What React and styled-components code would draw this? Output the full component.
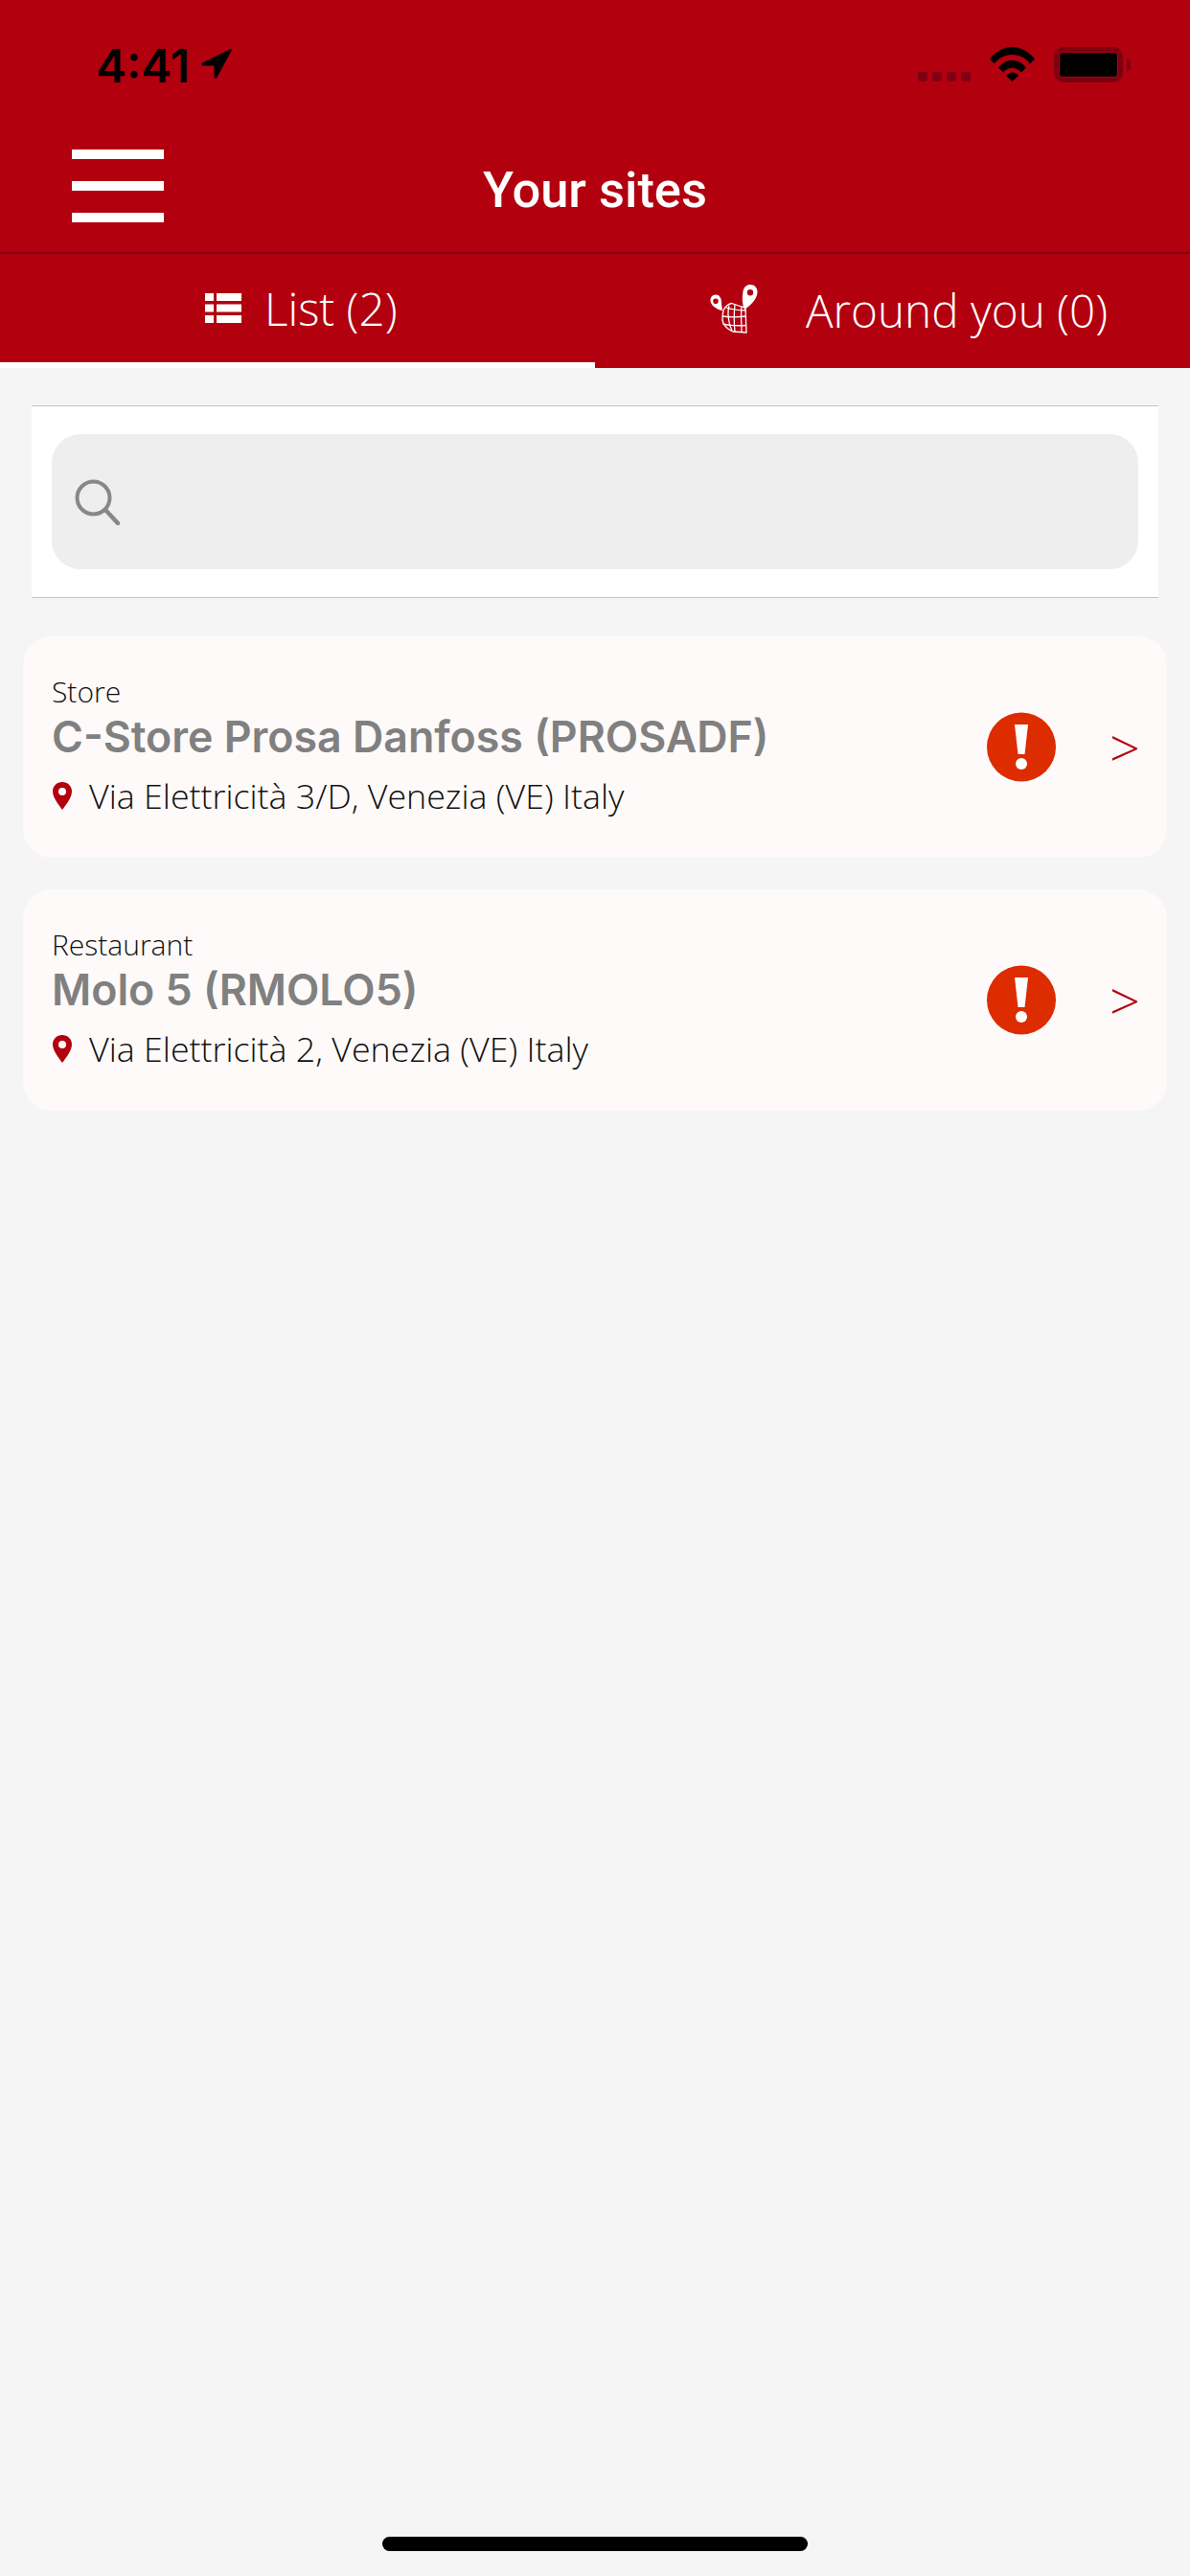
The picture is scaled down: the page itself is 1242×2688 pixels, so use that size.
import React from 'react';
import styled, { createGlobalStyle } from 'styled-components';

const GlobalStyle = createGlobalStyle`
  html, body {
    margin: 0;
    padding: 0;
    background: #f5f5f5;
  }
  * {
    box-sizing: border-box;
  }
`;

const Page = styled.div`
  width: 1242px;
  height: 2688px;
  display: flex;
  flex-direction: column;
  background: #f5f5f5;
  overflow: hidden;
`;

const Header = styled.header`
  background: #b2000f;
`;

const StatusBar = styled.div`
  height: 132px;
  padding: 42px 70px 0 100px;
  display: flex;
  align-items: flex-start;
`;

const Time = styled.span`
  font: 600 48px/54px Inter, "Liberation Sans", sans-serif;
  color: #000;
  margin-right: 11px;
`;

const ArrowSlot = styled.span`
  display: block;
  padding-top: 8px;
`;

const StatusIcons = styled.div`
  margin-left: auto;
  display: flex;
  align-items: flex-start;
  gap: 20px;
  padding-top: 7px;
`;

const SignalDots = styled.div`
  display: flex;
  gap: 5px;
  padding-top: 26px;
`;

const SignalDot = styled.span`
  width: 10px;
  height: 10px;
  border-radius: 3px;
  background: #7f0010;
`;

const Battery = styled.div`
  width: 72px;
  height: 37px;
  border: 5px solid #7f0010;
  border-radius: 10px;
  padding: 1px;
  position: relative;
  &::before {
    content: '';
    display: block;
    height: 100%;
    background: #000;
    border-radius: 4px;
  }
  &::after {
    content: '';
    position: absolute;
    right: -13px;
    top: 7px;
    width: 4px;
    height: 13px;
    background: #7f0010;
    border-radius: 0 4px 4px 0;
  }
`;

const NavBar = styled.div`
  height: 133px;
  border-bottom: 2px solid #7f0010;
  display: flex;
  align-items: center;
  position: relative;
`;

const MenuButton = styled.div`
  margin: 0 0 7px 75px;
  width: 96px;
  display: flex;
  flex-direction: column;
  gap: 23px;
  filter: blur(0.7px);
`;

const MenuBar = styled.span`
  height: 10px;
  background: #fff;
`;

const Title = styled.h1`
  margin: 0;
  position: absolute;
  left: 0;
  right: 0;
  text-align: center;
  font: 500 52.5px/60px Roboto, sans-serif;
  color: #fff;
`;

const Tabs = styled.div`
  display: flex;
  height: 119px;
`;

const Tab = styled.div`
  width: 621px;
  display: flex;
  align-items: center;
  padding-left: ${(p) => p.$inset}px;
  gap: ${(p) => p.$gap}px;
  border-bottom: 6px solid ${(p) => (p.$active ? '#fff' : '#b2000f')};
  font: 300 47.6px/60px "Open Sans", sans-serif;
  color: #fff;
  white-space: nowrap;
`;

const TabLabel = styled.span`
  position: relative;
  top: ${(p) => p.$shift || 0}px;
`;

const SearchPanel = styled.div`
  margin: 39px 33px 0;
  padding: 29px 21px;
  height: 201px;
  background: #fff;
  border-top: 1px solid #c4c4c4;
  border-bottom: 1px solid #c4c4c4;
`;

const SearchField = styled.div`
  height: 141px;
  padding: 0 0 0 24px;
  display: flex;
  align-items: center;
  background: #eee;
  border-radius: 30px;
`;

const CardList = styled.div`
  margin: 40px 24px 0;
  display: flex;
  flex-direction: column;
  gap: 33px;
`;

const Card = styled.div`
  height: 231px;
  padding: 38px 28px 0 30px;
  display: flex;
  background: #fdfaf9;
  border-radius: 30px;
`;

const CardBody = styled.div`
  flex: 1;
  min-width: 0;
`;

const SiteType = styled.div`
  font: 300 30px/40px "Open Sans", sans-serif;
  color: #111;
`;

const SiteName = styled.div`
  font: 600 44.7px/54px Inter, "Liberation Sans", sans-serif;
  color: #808080;
`;

const Address = styled.div`
  margin-top: 10px;
  display: flex;
  align-items: center;
  gap: 18px;
  padding-left: 1px;
  font: 300 35.8px/48px "Open Sans", sans-serif;
  color: #111;
`;

const CardSide = styled.div`
  display: flex;
  align-items: center;
  height: 154px;
  gap: 56px;
`;

const Chevron = styled.span`
  font: 300 56px/60px "Open Sans", sans-serif;
  color: #b2000f;
`;

const HomeBar = styled.div`
  margin: auto auto 26px;
  width: 444px;
  height: 15px;
  border-radius: 8px;
  background: #000;
`;

const sites = [
  { type: 'Store', name: 'C-Store Prosa Danfoss (PROSADF)', address: 'Via Elettricità 3/D, Venezia (VE) Italy' },
  { type: 'Restaurant', name: 'Molo 5 (RMOLO5)', address: 'Via Elettricità 2, Venezia (VE) Italy' },
];

function LocationArrow() {
  return (
    <svg width="33" height="33" viewBox="0 0 33 33">
      <path d="M31 1.5 2.5 15.5c-1.6.8-1 3 .7 3H14.5v11.8c0 1.8 2.4 2.2 3 .5L32.5 3c.5-1.2-.4-2-1.5-1.5Z" fill="#000" />
    </svg>
  );
}

function Wifi() {
  return (
    <svg width="47" height="36" viewBox="0 0 47 36">
      <path d="M0 12.5C6 5 14.500 0 23.500 0S41 5 47 12.500l-4.800 5C37.500 11.500 31 8 23.500 8S9.500 11.500 4.800 17.500Z" fill="#000" />
      <path d="M9 21.500C12.500 17 17.500 14 23.500 14s11 3 14.500 7.500l-5 5C30.500 23.500 27.500 22 23.500 22s-7 1.500-9.500 4.500Z" fill="#000" />
      <path d="M17 30c1.500-2 4-3.500 6.500-3.500S28.500 28 30 30l-6.500 6Z" fill="#000" />
    </svg>
  );
}

function ListIcon() {
  return (
    <svg width="38" height="31" viewBox="0 0 38 31">
      <path d="M0 0h9v8H0ZM12 0h26v8H12ZM0 11.500h9v8H0ZM12 11.500h26v8H12ZM0 23h9v8H0ZM12 23h26v8H12Z" fill="#fff" />
    </svg>
  );
}

function GlobePins() {
  return (
    <svg width="50" height="52" viewBox="0 0 50 52">
      <path fillRule="evenodd" d="M36 27C33.500 21 33.300 15 34.500 8c.8-4.500 4-7 7.500-7 4.500 0 7.700 3.500 7.500 8-.3 6.500-6 13-13.500 18ZM42 6a3.200 3.200 0 1 0 0 6.400A3.200 3.200 0 0 0 42 6Z" fill="#fff" />
      <path fillRule="evenodd" d="M13 28C6.500 27 1 22.500.5 18c-.4-3.700 2.200-6.500 5.500-6.500 3.500 0 5.500 3 5.800 6 .2 3.500.5 7 1.200 10.500ZM6 15.500a2.800 2.800 0 1 0 0 5.600 2.800 2.800 0 0 0 0-5.600Z" fill="#fff" />
      <g fill="none" stroke="#fff" strokeWidth="1.300">
        <path d="M14 28c2-4 6-7 9-7.500 3 1 7 3 14 4.500l1 26-14-1c-5-2-11-7-11-13 0-3 .3-6 1-9Z" />
        <path d="M13 34c8 1 17 1 25 0M13.500 42c8 2 16 2 24.500 1.500M17 25c6 2 13 3 21 3" />
        <path d="M20 23c-2 7-1 18 3 26M26 22c-1 9-1 19 0 28M33 24c-1 8 0 18 0 26" />
      </g>
    </svg>
  );
}

function SearchIcon() {
  return (
    <svg width="48" height="48" viewBox="0 0 48 48">
      <circle cx="19.500" cy="19.500" r="17" fill="none" stroke="#87878b" strokeWidth="4" />
      <path d="M32 32 45 46" fill="none" stroke="#87878b" strokeWidth="4.500" strokeLinecap="round" />
    </svg>
  );
}

function Pin() {
  return (
    <svg width="20" height="29" viewBox="0 0 20 29">
      <path fillRule="evenodd" d="M10 0C4.500 0 0 4.200 0 9.700 0 16 6 23.500 10 29c4-5.500 10-13 10-19.300C20 4.200 15.500 0 10 0Zm0 6a4 4 0 1 1 0 8 4 4 0 0 1 0-8Z" fill="#b2000f" />
    </svg>
  );
}

function AlertBadge() {
  return (
    <svg width="72" height="73" viewBox="0 0 72 73">
      <circle cx="36" cy="36.500" r="36" fill="#dd2c00" />
      <path d="M29 13h14l-3.500 31h-7Z" fill="#fff" />
      <circle cx="36" cy="54" r="6" fill="#fff" />
    </svg>
  );
}

export default function App() {
  return (
    <Page>
      <GlobalStyle />
      <Header>
        <StatusBar>
          <Time>4:41</Time>
          <ArrowSlot>
            <LocationArrow />
          </ArrowSlot>
          <StatusIcons>
            <SignalDots>
              <SignalDot />
              <SignalDot />
              <SignalDot />
              <SignalDot />
            </SignalDots>
            <Wifi />
            <Battery />
          </StatusIcons>
        </StatusBar>
        <NavBar>
          <MenuButton>
            <MenuBar />
            <MenuBar />
            <MenuBar />
          </MenuButton>
          <Title>Your sites</Title>
        </NavBar>
        <Tabs>
          <Tab $active $inset={214} $gap={24}>
            <ListIcon />
            <TabLabel>List (2)</TabLabel>
          </Tab>
          <Tab $inset={120} $gap={50}>
            <GlobePins />
            <TabLabel $shift={2}>Around you (0)</TabLabel>
          </Tab>
        </Tabs>
      </Header>

      <SearchPanel>
        <SearchField>
          <SearchIcon />
        </SearchField>
      </SearchPanel>

      <CardList>
        {sites.map((site) => (
          <Card key={site.name}>
            <CardBody>
              <SiteType>{site.type}</SiteType>
              <SiteName>{site.name}</SiteName>
              <Address>
                <Pin />
                {site.address}
              </Address>
            </CardBody>
            <CardSide>
              <AlertBadge />
              <Chevron>&gt;</Chevron>
            </CardSide>
          </Card>
        ))}
      </CardList>

      <HomeBar />
    </Page>
  );
}
